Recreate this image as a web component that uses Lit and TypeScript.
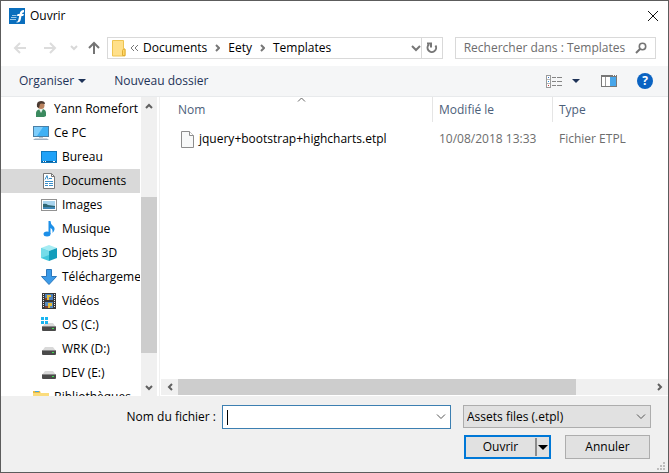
import { LitElement, html, css, svg, TemplateResult } from "lit";
import { customElement, property } from "lit/decorators.js";

const icon = (w: number, h: number, body: TemplateResult) =>
  html`<svg width=${w} height=${h} viewBox="0 0 ${w} ${h}" aria-hidden="true">${body}</svg>`;

const stroke = (w: number, h: number, d: string, color: string, width = 1) =>
  icon(w, h, svg`<path d=${d} fill="none" stroke=${color} stroke-width=${width}></path>`);

const drive = svg`
  <path d="M4 6h8l3 4H1z" fill="#d9d9d9"></path>
  <rect x="1" y="9" width="14" height="5" rx="1" fill="#4a4a4a"></rect>
  <rect x="1" y="9" width="14" height="1" fill="#888"></rect>
  <rect x="11" y="11" width="2" height="1" fill="#3ce04c"></rect>`;

const icons: Record<string, TemplateResult> = {
  user: icon(16, 16, svg`
    <path d="M3 16v-4q0-3 4-4h3q3 1 3 4v3l-2 1z" fill="#3b8a5f"></path>
    <path d="M6 8l2 4 2-4z" fill="#e8f2ee"></path>
    <circle cx="8" cy="4.500" r="3.500" fill="#b9835f"></circle>
    <path d="M4 6q-1-6 4-6 4 0 4 3-4-1-5 0l-1 4z" fill="#4b3a31"></path>`),
  pc: icon(16, 16, svg`
    <rect x=".5" y="1.500" width="15" height="10" fill="#3fb1f5" stroke="#4a7fa5"></rect>
    <path d="M1 2h9l-6 9H1z" fill="#7dcdfb"></path>
    <rect x="6" y="12" width="4" height="1" fill="#b9c6cf"></rect>
    <path d="M2 13.500h12l2 1.500H0z" fill="#9fb0c0"></path>`),
  desktop: icon(16, 16, svg`
    <rect x=".5" y="2.500" width="15" height="11" fill="#1fa2f8" stroke="#0f78bd"></rect>
    <path d="M1 12.500h14" stroke="#0b5c95"></path>
    <path d="M2 12.500h1m1 0h1m7 0h2" stroke="#fff"></path>`),
  doc: icon(16, 16, svg`
    <path d="M2.500.5h8l3 3v12h-11z" fill="#fff" stroke="#777"></path>
    <path d="M10.500.5v3h3" fill="none" stroke="#777"></path>
    <path d="M4 6.500l2-4 1 4M8 5.500h3M4 8.500h8M4 10.500h3M4 12.500h3M8 12.500h4" fill="none" stroke="#3a8fc9"></path>
    <rect x="8" y="10" width="4" height="1" fill="#3a8fc9"></rect>`),
  image: icon(16, 16, svg`
    <rect x=".5" y="2.500" width="15" height="11" fill="#fff" stroke="#929292"></rect>
    <rect x="2" y="4" width="12" height="8" fill="#a9d4ee"></rect>
    <path d="M2 7q3-1 5 1l7 1v3H2z" fill="#2d6674"></path>
    <path d="M2 10h12v2H2z" fill="#3f86b5"></path>`),
  music: icon(16, 16, svg`
    <ellipse cx="6" cy="13" rx="3.500" ry="2.500" fill="#1c8fe8"></ellipse>
    <path d="M7.500 0h2q0 3 2.500 5t1 5l-1.500 2q.5-4-2-5V13h-2z" fill="#1c8fe8"></path>`),
  cube: icon(16, 16, svg`
    <path d="M8 0l8 3-8 3-8-3z" fill="#a6ecf3"></path>
    <path d="M0 3l8 3v10l-8-3z" fill="#41c7dc"></path>
    <path d="M16 3L8 6v10l8-3z" fill="#139dbb"></path>
    <path d="M0 3l8 3v4l-8 3z" fill="#74dce9"></path>`),
  download: icon(16, 16, svg`
    <path d="M5.500.5h5v7h5L8 15.500.5 7.500h5z" fill="#3c9be8" stroke="#2c78bd"></path>`),
  video: icon(16, 16, svg`
    <rect x="1" y="0" width="14" height="16" fill="#383838"></rect>
    <path d="M2.500 1v14M13.500 1v14" stroke="#e8e8e8" stroke-dasharray="1 1"></path>
    <rect x="4" y="1" width="8" height="6" fill="#4c80bd"></rect>
    <rect x="4" y="9" width="8" height="6" fill="#5689bd"></rect>
    <path d="M6 2h4v2H8v3H6zM7 10h4v3H9v2H7z" fill="#e6bd37"></path>
    <path d="M4 5h2v2H4zM4 13h3v2H4z" fill="#7d3f34"></path>`),
  os: icon(16, 16, svg`${drive}
    <path d="M0 0h7v7H0z" fill="#fff"></path>
    <path d="M0 0h3v3H0zM4 0h3v3H4zM0 4h3v3H0zM4 4h3v3H4z" fill="#19b5f1"></path>`),
  drive: icon(16, 16, drive),
  library: icon(16, 16, svg`
    <path d="M0 2h7l1 2h8v12H0z" fill="#fbdc7c"></path>
    <path d="M0 2h7v2H0z" fill="#eabb43"></path>
    <rect x="2" y="2" width="4" height="1" fill="#49a8dd"></rect>`),
  app: icon(16, 16, svg`
    <rect width="16" height="16" fill="#0a6ebd"></rect>
    <path d="M7 14q2 0 2.300-2l.9-4H8l.6-2h2q.6-4 4.400-4v2.200q-1.700 0-2 1.800h2l-.8 2h-1.700l-1 4.500Q11 14.500 8 14.500z" fill="#fff"></path>
    <path d="M3 7.500h4.500M2 9.500h5.500M1 11.500h6" stroke="#9cc9ea"></path>`),
  folder: icon(14, 17, svg`
    <path d="M.5.500h11v8l1.500 1v6.500H.5z" fill="#ffe08a" stroke="#eec451"></path>
    <path d="M10.500 15.500v-5l1-1.500h1.500v6.500z" fill="#ffd766" stroke="#e0ad32"></path>`),
  back: stroke(14, 12, "M13 6H2M7 1L2 6l5 5", "#dcdcdc", 2),
  forward: stroke(14, 12, "M1 6h11M7 1l5 5-5 5", "#dcdcdc", 2),
  recent: stroke(8, 6, "M1 1l3 3 3-3", "#d8d8d8", 2),
  up: stroke(12, 14, "M6 13V2M1 7l5-5 5 5", "#747474", 2),
  prev: stroke(9, 8, "M4 1L1 4l3 3M8 1L5 4l3 3", "#777"),
  crumb: stroke(5, 8, "M1 1l3 3-3 3", "#777", 2),
  down: stroke(10, 7, "M1 1l4 4 4-4", "#777", 2),
  refresh: stroke(12, 12, "M3 2.500A4.300 4.300 0 1 0 9.500 3.500M1 1.500h4v4", "#777", 2),
  search: icon(12, 12, svg`
    <circle cx="7.500" cy="4.500" r="3.200" fill="none" stroke="#747474" stroke-width="1.600"></circle>
    <path d="M5 7L1 11" stroke="#747474" stroke-width="2"></path>`),
  close: stroke(10, 10, "M0 0l10 10M10 0L0 10", "#111"),
  caret: icon(8, 4, svg`<path d="M0 0h8L4 4z" fill="#1e3358"></path>`),
  blackCaret: icon(10, 5, svg`<path d="M0 0h10L5 5z" fill="#000"></path>`),
  view: icon(16, 13, svg`
    <rect x=".5" y=".5" width="4" height="12" fill="#fff" stroke="#9a9a9a"></rect>
    <path d="M1 4.500h3M1 8.500h3" stroke="#b5b5b5"></path>
    <path d="M2 2.500h1" stroke="#2f71c9"></path><path d="M2 6.500h1" stroke="#2b95e0"></path><path d="M2 10.500h1" stroke="#c53f3f"></path>
    <path d="M6 2.500h4m1 0h5M6 6.500h4m1 0h5M6 10.500h4m1 0h5" stroke="#858585"></path>`),
  pane: icon(16, 12, svg`
    <rect x=".5" y=".5" width="15" height="11" fill="#fff" stroke="#777"></rect>
    <path d="M0 1h16" stroke="#777" stroke-width="2"></path>
    <path d="M4.500 2v9" stroke="#999"></path><path d="M12 .5h1m1 0h1" stroke="#fff"></path>
    <rect x="9" y="2" width="6" height="9" fill="#48a6ea"></rect>`),
  file: icon(13, 17, svg`
    <path d="M.5.500h8l4 4v12H.5z" fill="#f8f9f9" stroke="#8d8d8d"></path>
    <path d="M8.500.5v4h4" fill="#fff" stroke="#8d8d8d"></path>`),
  sort: stroke(9, 5, "M1 4.500l3.500-3.500L8 4.500", "#666"),
  sbUp: stroke(8, 6, "M1 5l3-3 3 3", "#606060", 2),
  sbDown: stroke(8, 6, "M1 1l3 3 3-3", "#606060", 2),
  sbLeft: stroke(6, 8, "M5 1L2 4l3 3", "#606060", 2),
  sbRight: stroke(6, 8, "M1 1l3 3-3 3", "#606060", 2),
  combo: stroke(10, 6, "M1 .5l4 4 4-4", "#555"),
  grip: icon(8, 8, svg`<path d="M6 0h2v2H6zM3 3h2v2H3zM6 3h2v2H6zM0 6h2v2H0zM3 6h2v2H3zM6 6h2v2H6z" fill="#bdbdbd"></path>`),
};

const base = css`
  * { box-sizing: border-box; }
  svg { display: block; flex: none; }
  button, input, select { font: inherit; color: inherit; margin: 0; padding: 0; border: 0; border-radius: 0; background: none; outline: none; }
  a { color: inherit; text-decoration: none; }
`;

@customElement("folder-tree")
export class FolderTree extends LitElement {
  static styles = [base, css`
    :host { display: flex; overflow: hidden; background: #fff; border-right: 1px solid #f0f0f0; }
    .tree { list-style: none; margin: 0; padding: 0; flex: 1; min-width: 0; overflow-x: hidden; overflow-y: auto; scrollbar-width: none; }
    .node { display: flex; align-items: center; gap: 5px; height: 24px; padding-left: 32px; white-space: nowrap; }
    .child { padding-left: 40px; }
    .selected { background: #d9d9d9; }
    .bar { width: 16px; margin: 0 2px 0 1px; background: #f0f0f0; display: flex; flex-direction: column; align-items: center; }
    .end { height: 17px; display: flex; align-items: center; flex: none; }
    .track { flex: 1; width: 100%; display: flex; flex-direction: column; }
    .space { flex: 83; }
    .thumb { flex: 156; background: #cdcdcd; }
    .rest { flex: 26; }
  `];

  private nodes = [
    ["user", "Yann Romefort", 0], ["pc", "Ce PC", 0], ["desktop", "Bureau", 1], ["doc", "Documents", 1],
    ["image", "Images", 1], ["music", "Musique", 1], ["cube", "Objets 3D", 1], ["download", "Téléchargements", 1],
    ["video", "Vidéos", 1], ["os", "OS (C:)", 1], ["drive", "WRK (D:)", 1], ["drive", "DEV (E:)", 1],
    ["library", "Bibliothèques", 0],
  ] as [string, string, number][];

  @property() selected = "Documents";

  render() {
    return html`
      <ul class="tree">
        ${this.nodes.map(([name, label, depth]) => html`
          <li><a href="#" class="node ${depth ? "child" : ""} ${label === this.selected ? "selected" : ""}"
            @click=${() => (this.selected = label)}>${icons[name]}<span>${label}</span></a></li>`)}
      </ul>
      <div class="bar">
        <div class="end">${icons.sbUp}</div>
        <div class="track"><div class="space"></div><div class="thumb"></div><div class="rest"></div></div>
        <div class="end">${icons.sbDown}</div>
      </div>`;
  }
}

@customElement("file-list")
export class FileList extends LitElement {
  static styles = [base, css`
    :host { display: flex; flex-direction: column; min-width: 0; background: #fff; padding-left: 1px; }
    .files { flex: 1; overflow: hidden; }
    table { width: 100%; table-layout: fixed; border-collapse: separate; border-spacing: 0; }
    .name { width: 272px; }
    .date { width: 120px; }
    th { height: 25px; padding: 0 0 0 6px; text-align: left; font-weight: 400; color: #4c607a; border-right: 1px solid #e5e5e5; position: relative; }
    th:first-child { padding-left: 17px; }
    th:last-child { border-right: 0; }
    .sort { position: absolute; top: 0; left: 50%; }
    td { height: 34px; padding: 0 0 0 6px; color: #6d6d6d; white-space: nowrap; }
    td:first-child { padding-left: 20px; }
    .file { display: flex; align-items: center; gap: 5px; color: #000; }
    .bar { height: 16px; margin-bottom: 1px; background: #f0f0f0; display: flex; align-items: center; }
    .end { width: 17px; display: flex; justify-content: center; flex: none; }
    .track { flex: 1; height: 100%; display: flex; }
    .thumb { flex: 398; background: #cdcdcd; }
    .rest { flex: 75; }
  `];

  render() {
    return html`
      <div class="files">
        <table>
          <colgroup><col class="name"><col class="date"><col></colgroup>
          <thead><tr>
            <th scope="col">Nom<span class="sort">${icons.sort}</span></th>
            <th scope="col">Modifié le</th><th scope="col">Type</th>
          </tr></thead>
          <tbody><tr>
            <td><a href="#" class="file">${icons.file}<span>jquery+bootstrap+highcharts.etpl</span></a></td>
            <td>10/08/2018 13:33</td><td>Fichier ETPL</td>
          </tr></tbody>
        </table>
      </div>
      <div class="bar">
        <div class="end">${icons.sbLeft}</div>
        <div class="track"><div class="thumb"></div><div class="rest"></div></div>
        <div class="end">${icons.sbRight}</div>
      </div>`;
  }
}

@customElement("app-root")
export class AppRoot extends LitElement {
  static styles = [base, css`
    :host { display: block; font: 12px/16px "Open Sans", "Noto Sans", sans-serif; color: #000; }
    .dialog { height: 100vh; display: flex; flex-direction: column; border: 1px solid #5c5c5c; background: #fff; }
    .title, .nav, .tools, .footer { flex: none; }
    .title { display: flex; align-items: center; gap: 5px; height: 29px; padding: 0 10px 0 8px; }
    h1 { flex: 1; margin: 0; font-size: 12px; font-weight: 400; }
    .nav { display: flex; align-items: center; height: 36px; padding: 0 12px; }
    .arrows { display: flex; align-items: center; width: 94px; }
    .arrows button:nth-child(2) { margin-left: 16px; }
    .arrows button:nth-child(3) { margin-left: 13px; }
    .arrows button:nth-child(4) { margin-left: 10px; }
    .address { display: flex; flex: 335; height: 22px; border: 1px solid #d9d9d9; }
    .crumbs { display: flex; flex: 1; align-items: center; padding: 0 4px; gap: 8px; }
    .crumbs svg:first-child { margin-right: -4px; }
    .crumbs button { margin-left: auto; }
    .refresh { width: 21px; border-left: 1px solid #d9d9d9; display: flex; align-items: center; justify-content: center; }
    .search { display: flex; flex: 184; align-items: center; height: 22px; margin-left: 12px; padding: 0 8px; border: 1px solid #d9d9d9; }
    .search input { flex: 1; min-width: 0; }
    .search input::placeholder { color: #6d6d6d; opacity: 1; }
    .tools { display: flex; align-items: center; height: 31px; padding: 0 15px 0 18px; background: #f5f6f7; border-bottom: 1px solid #e8eaec; color: #1e3358; }
    .tools button { display: flex; align-items: center; gap: 4px; }
    .tools .new { margin-left: 28px; }
    .tools .view { margin-left: auto; gap: 10px; }
    .pane { margin: 0 20px 0 21px; }
    .tools .help { width: 16px; height: 16px; justify-content: center; border-radius: 50%; background: #0a63c2; color: #fff; font-weight: 700; }
    .main { flex: 1; display: flex; min-height: 0; }
    folder-tree { width: 159px; flex: none; }
    file-list { flex: 1; }
    .footer { display: grid; grid-template-columns: 1fr 229px 188px; column-gap: 12px; row-gap: 6px; padding: 9px 17px 13px 0; background: #f0f0f0; position: relative; }
    .label { justify-self: end; align-self: center; margin-right: -6px; }
    .combo { display: flex; align-items: center; height: 24px; padding: 0 4px; background: #fff; border: 1px solid #3c7fb1; }
    .cursor { width: 1px; height: 15px; background: #000; }
    .combo input { flex: 1; min-width: 0; height: 22px; caret-color: transparent; }
    .filter { display: flex; align-items: center; position: relative; height: 23px; background: #e1e1e1; border: 1px solid #adadad; }
    .filter select { appearance: none; width: 100%; height: 21px; padding-left: 3px; }
    .filter svg { position: absolute; right: 4px; pointer-events: none; }
    .actions { grid-column: 3; display: flex; gap: 14px; padding: 0 1px; }
    .actions > * { flex: 1; height: 24px; }
    .split { display: flex; background: #e1e1e1; border: 2px solid #0078d7; }
    .open { flex: 1; }
    .more { width: 14px; margin: 1px 0; border-left: 2px solid #8c8c8c; display: flex; align-items: center; justify-content: center; }
    .cancel { background: #e1e1e1; border: 1px solid #adadad; }
    .grip { position: absolute; right: 3px; bottom: 2px; }
  `];

  render() {
    return html`
      <div class="dialog" role="dialog" aria-label="Ouvrir">
        <header class="title">${icons.app}<h1>Ouvrir</h1><button aria-label="Fermer">${icons.close}</button></header>
        <div class="nav">
          <div class="arrows">
            <button aria-label="Précédent">${icons.back}</button><button aria-label="Suivant">${icons.forward}</button>
            <button aria-label="Récents">${icons.recent}</button><button aria-label="Dossier parent">${icons.up}</button>
          </div>
          <div class="address">
            <div class="crumbs">
              ${icons.folder}<span>${icons.prev}</span>
              <a href="#">Documents</a>${icons.crumb}<a href="#">Eety</a>${icons.crumb}<a href="#">Templates</a>
              <button aria-label="Historique">${icons.down}</button>
            </div>
            <button class="refresh" aria-label="Actualiser">${icons.refresh}</button>
          </div>
          <label class="search"><input type="text" aria-label="Rechercher" placeholder="Rechercher dans : Templates">${icons.search}</label>
        </div>
        <div class="tools">
          <button>Organiser ${icons.caret}</button>
          <button class="new">Nouveau dossier</button>
          <button class="view" aria-label="Affichage">${icons.view}${icons.caret}</button>
          <button class="pane" aria-label="Volet de visualisation">${icons.pane}</button>
          <button class="help" aria-label="Aide">?</button>
        </div>
        <div class="main"><folder-tree></folder-tree><file-list></file-list></div>
        <div class="footer">
          <label class="label" for="filename">Nom du fichier :</label>
          <div class="combo"><span class="cursor"></span><input id="filename" type="text">${icons.combo}</div>
          <div class="filter"><select aria-label="Type de fichier"><option>Assets files (.etpl)</option></select>${icons.combo}</div>
          <div class="actions">
            <div class="split"><button class="open">Ouvrir</button><button class="more" aria-label="Options">${icons.blackCaret}</button></div>
            <button class="cancel">Annuler</button>
          </div>
          <span class="grip">${icons.grip}</span>
        </div>
      </div>`;
  }
}
